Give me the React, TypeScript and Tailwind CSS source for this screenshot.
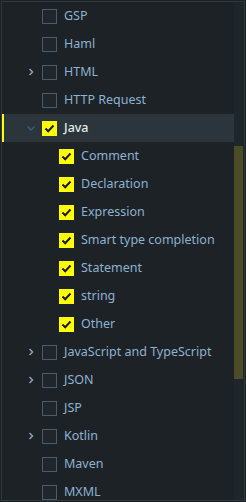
import React from "react";

type Row = { label: string; level: 0 | 1; chevron?: "right" | "down"; checked?: boolean; active?: boolean };

const rows: Row[] = [
  { label: "GSP", level: 0 },
  { label: "Haml", level: 0 },
  { label: "HTML", level: 0, chevron: "right" },
  { label: "HTTP Request", level: 0 },
  { label: "Java", level: 0, chevron: "down", checked: true, active: true },
  { label: "Comment", level: 1, checked: true },
  { label: "Declaration", level: 1, checked: true },
  { label: "Expression", level: 1, checked: true },
  { label: "Smart type completion", level: 1, checked: true },
  { label: "Statement", level: 1, checked: true },
  { label: "string", level: 1, checked: true },
  { label: "Other", level: 1, checked: true },
  { label: "JavaScript and TypeScript", level: 0, chevron: "right" },
  { label: "JSON", level: 0, chevron: "right" },
  { label: "JSP", level: 0 },
  { label: "Kotlin", level: 0, chevron: "right" },
  { label: "Maven", level: 0 },
  { label: "MXML", level: 0 },
];

function Chevron({ dir }: { dir: "right" | "down" }) {
  if (dir === "right")
    return (
      <svg width="10" height="10" viewBox="0 0 10 10" className="block">
        <path d="M3.5 2 L6.5 5 L3.5 8" fill="none" stroke="#8aa3b8" strokeWidth="1.5" />
      </svg>
    );
  return (
    <svg width="10" height="10" viewBox="0 0 10 10" className="block">
      <path d="M1.5 3.5 L5 7 L8.5 3.5" fill="none" stroke="#3f5a78" strokeWidth="1.4" />
    </svg>
  );
}

function Box({ checked }: { checked?: boolean }) {
  if (checked)
    return (
      <div className="w-[15px] h-[15px] bg-[#ffff00] flex items-center justify-center shrink-0">
        <svg width="13" height="13" viewBox="0 0 13 13">
          <path d="M2.5 6.5 L5.2 9.2 L10.5 3.5" fill="none" stroke="#1a1a1a" strokeWidth="2" />
        </svg>
      </div>
    );
  return <div className="w-[15px] h-[15px] border border-[#4b5c68] bg-[#20272c] shrink-0" />;
}

export default function App() {
  return (
    <div
      className="w-[246px] h-[502px] bg-[#1c2226] overflow-hidden"
      style={{ fontFamily: '"Noto Sans", "Open Sans", sans-serif' }}
    >
      <div className="ml-px mt-px w-[244px] h-[500px] border border-[#2e393f] flex">
        <div className="flex-1 flex flex-col">
          {rows.map((r, i) => (
            <div
              key={i}
              className={`h-[28px] shrink-0 flex items-center relative ${r.active ? "bg-[#2b353b]" : ""}`}
            >
              {r.active && <div className="absolute left-0 top-0 bottom-0 w-[2px] bg-[#ffff00]" />}
              {r.level === 0 ? (
                <>
                  <div className="w-[40px] pl-[24px] flex items-center">
                    {r.chevron && <Chevron dir={r.chevron} />}
                  </div>
                  <Box checked={r.checked} />
                  <span
                    className={`ml-[7px] text-[12.5px] whitespace-nowrap ${
                      r.active ? "text-[#e3e8ec] font-medium" : "text-[#8eb2d0]"
                    }`}
                  >
                    {r.label}
                  </span>
                </>
              ) : (
                <>
                  <div className="w-[57px]" />
                  <Box checked />
                  <span className="ml-[7px] text-[12.5px] whitespace-nowrap text-[#8eb2d0]">{r.label}</span>
                </>
              )}
            </div>
          ))}
        </div>
        <div className="w-[10px] bg-[#1f262b] flex flex-col">
          <div className="h-[144px]" />
          <div className="h-[233px] w-[9px] bg-[#4a4d26]" />
        </div>
      </div>
    </div>
  );
}
